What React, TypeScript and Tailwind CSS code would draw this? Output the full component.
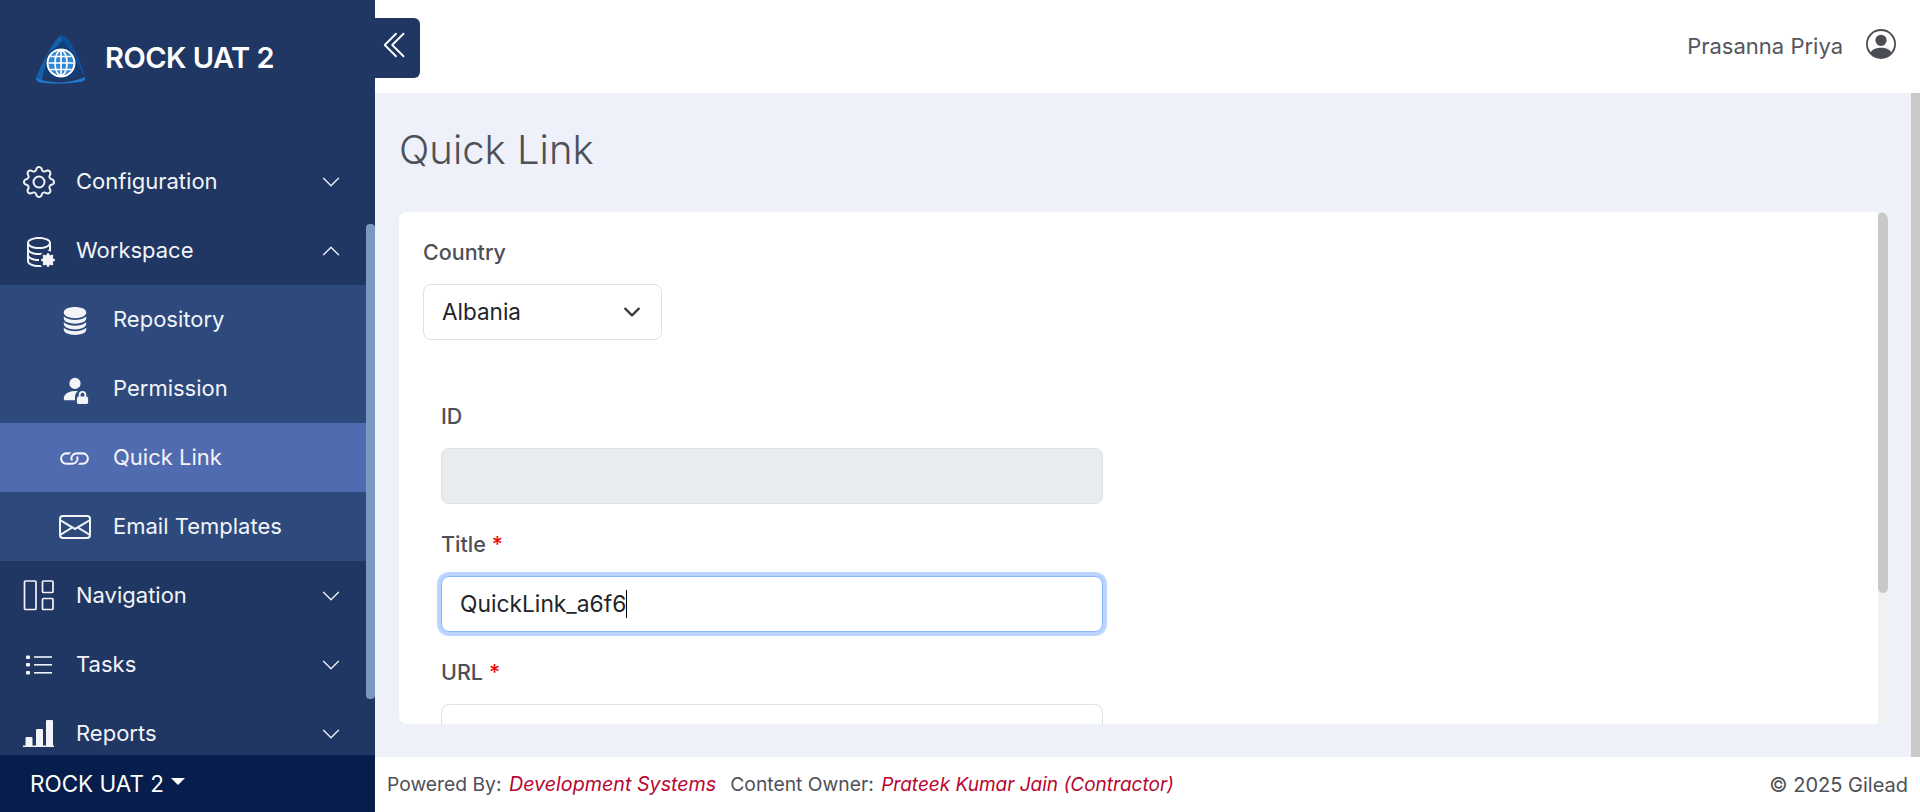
import { ReactNode } from 'react';
import {
  BsGear,
  BsDatabaseGear,
  BsDatabaseFill,
  BsPersonFillLock,
  BsLink,
  BsEnvelope,
  BsChevronDown,
  BsChevronUp,
  BsChevronDoubleLeft,
  BsPersonCircle,
} from 'react-icons/bs';

const Logo = () => (
  <svg width="50" height="50" viewBox="0 0 50 50" className="shrink-0 mt-[4px]">
    <path d="M25 5 C33 8 41 22 43 38 C36 46 14 46 7 38 C9 22 17 8 25 5Z" fill="#123f7c" />
    <path d="M25 0 C16 7 5 30 0 43 C0 46 2 47 6 45 C8 30 17 12 29 4 C28 2 27 0 25 0Z" fill="#1560ab" />
    <path d="M23 1 C28 -1 32 3 35 8 C41 19 47 33 49 43 C43 33 36 14 23 1Z" fill="#0f4f98" />
    <path d="M0 43 C14 49 34 49 49 42 C50 45 47 47 43 47 C30 49 12 49 3 47 C1 46 0 45 0 43Z" fill="#1f7ad4" />
    <circle cx="25" cy="28" r="15.5" fill="#0b2f66" />
    <circle cx="25" cy="28" r="14.5" fill="#ffffff" />
    <circle cx="25" cy="28" r="12.5" fill="#2f86d6" />
    <g fill="none" stroke="#ffffff" strokeWidth="1.7">
      <ellipse cx="25" cy="28" rx="6" ry="12.5" />
      <path d="M25 15.5 V40.5 M12.5 28 H37.5 M14.5 21.5 H35.5 M14.5 34.5 H35.5" />
    </g>
  </svg>
);

const NavigationIcon = () => (
  <svg width="31" height="31" viewBox="0 0 31 31" fill="none" stroke="currentColor" strokeWidth="1.7">
    <rect x="1.5" y="1" width="11.5" height="28.5" rx="1" />
    <rect x="19.5" y="1" width="10.5" height="11.5" rx="1" />
    <rect x="19.5" y="18.5" width="10.5" height="11" rx="1" />
  </svg>
);

const TasksIcon = () => (
  <svg width="27" height="20" viewBox="0 0 27 20" fill="currentColor" className="ml-[3px]">
    <rect x="0" y="0.5" width="4" height="3.5" rx="1" />
    <rect x="0" y="8" width="4" height="3.5" rx="1" />
    <rect x="0" y="16" width="4" height="3.5" rx="1" />
    <rect x="8" y="1.2" width="18" height="1.6" />
    <rect x="8" y="9" width="18" height="1.6" />
    <rect x="8" y="17" width="18" height="1.6" />
  </svg>
);

const ReportsIcon = () => (
  <svg width="31" height="27" viewBox="0 0 31 27" fill="currentColor">
    <rect x="2.5" y="17" width="7" height="9" rx="1" />
    <rect x="13" y="9" width="7" height="17" rx="1" />
    <rect x="23" y="0" width="7" height="26" rx="1" />
    <rect x="0" y="25.5" width="31" height="1.5" />
  </svg>
);

interface MenuRowProps {
  icon: ReactNode;
  label: string;
  open?: boolean;
}

function MenuRow({ icon, label, open }: MenuRowProps) {
  return (
    <div className="h-[69px] flex items-center text-[#f2f4f8]">
      <div className="w-[76px] pl-[23px] shrink-0 flex items-center">{icon}</div>
      <span className="text-[22px] flex-1">{label}</span>
      {open ? (
        <BsChevronUp className="w-[20px] h-[20px] mr-[25px]" />
      ) : (
        <BsChevronDown className="w-[20px] h-[20px] mr-[25px]" />
      )}
    </div>
  );
}

interface SubRowProps {
  icon: ReactNode;
  label: string;
  active?: boolean;
}

function SubRow({ icon, label, active }: SubRowProps) {
  return (
    <div className={`h-[69px] flex items-center text-[#f2f4f8] ${active ? 'bg-[#516bb0]' : ''}`}>
      <div className="w-[113px] pl-[59px] shrink-0 flex items-center">{icon}</div>
      <span className="text-[22px]">{label}</span>
    </div>
  );
}

function Field({ label, required, children }: { label: string; required?: boolean; children: ReactNode }) {
  return (
    <div className="w-[662px] mb-[25px]">
      <div className="h-[31px] mb-[16px] text-[21.5px] font-medium text-[#4e5057] leading-[31px]">
        {label}
        {required && <span className="text-[#ee0000] ml-[6px]">*</span>}
      </div>
      {children}
    </div>
  );
}

export default function App() {
  return (
    <div className="h-screen w-full flex overflow-hidden bg-white font-['Inter','Liberation_Sans',sans-serif]">
      {/* sidebar */}
      <aside className="w-[375px] shrink-0 flex flex-col bg-[#203663]">
        <div className="h-[116px] shrink-0 flex items-center pl-[36px] gap-[19px]">
          <Logo />
          <span className="text-[29px] font-semibold text-white tracking-[-0.5px]">ROCK UAT 2</span>
        </div>
        <div className="flex-1 flex min-h-0 overflow-hidden relative">
          <nav className="flex-1 min-w-0 pt-[31px]">
            <MenuRow icon={<BsGear className="w-[32px] h-[32px]" />} label="Configuration" />
            <MenuRow icon={<BsDatabaseGear className="w-[32px] h-[32px]" />} label="Workspace" open />
            <div className="bg-[#2e4a7d]">
              <SubRow icon={<BsDatabaseFill className="w-[30px] h-[30px] ml-[1px]" />} label="Repository" />
              <SubRow icon={<BsPersonFillLock className="w-[30px] h-[30px] ml-[1px]" />} label="Permission" />
              <SubRow icon={<BsLink className="w-[33px] h-[33px] -ml-[1px]" />} label="Quick Link" active />
              <SubRow icon={<BsEnvelope className="w-[32px] h-[32px]" />} label="Email Templates" />
            </div>
            <MenuRow icon={<NavigationIcon />} label="Navigation" />
            <MenuRow icon={<TasksIcon />} label="Tasks" />
            <MenuRow icon={<ReportsIcon />} label="Reports" />
          </nav>
          <div className="w-[9px] shrink-0 pt-[108px]">
            <div className="h-[475px] rounded-[4px] bg-[#7b98c2]" />
          </div>
        </div>
        <div className="h-[57px] shrink-0 bg-[#071d4b] flex items-center pl-[30px] text-white text-[22.5px]">
          ROCK UAT 2
          <span className="ml-[7px] mb-[4px] w-0 h-0 border-x-[7px] border-x-transparent border-t-[7px] border-t-white" />
        </div>
      </aside>

      {/* main */}
      <div className="flex-1 min-w-0 flex flex-col relative">
        <button className="absolute left-0 top-[18px] w-[45px] h-[60px] bg-[#203663] rounded-r-[6px] flex items-center text-white pl-[6px] pb-[7px]">
          <BsChevronDoubleLeft className="w-[30px] h-[30px]" />
        </button>
        <header className="h-[93px] shrink-0 flex items-start justify-end pt-[32px] pr-[24px] gap-[23px] text-[#54565d]">
          <span className="text-[22px] leading-[29px]">Prasanna Priya</span>
          <BsPersonCircle className="w-[30px] h-[30px] text-[#4b4d55] -mt-[3px]" />
        </header>
        <div className="flex-1 min-h-0 flex bg-[#eef1f9]">
          <div className="flex-1 min-w-0 flex flex-col pl-[24px] pr-[23px]">
            <h1 className="h-[119px] shrink-0 text-[40px] font-light text-[#4f5158] flex items-center pb-[6px]">
              Quick Link
            </h1>
            <div className="h-[512px] shrink-0 flex bg-white rounded-[8px] overflow-hidden">
              <div className="flex-1 min-w-0 overflow-hidden pl-[24px] pt-[25px]">
                <div className="h-[31px] mb-[16px] text-[21.5px] font-medium text-[#4e5057] leading-[31px]">
                  Country
                </div>
                <div className="w-[239px] h-[56px] border border-[#dee2e6] rounded-[8px] flex items-center justify-between pl-[18px] pr-[20px] text-[#212529] text-[22.5px]">
                  Albania
                  <BsChevronDown className="w-[18px] h-[18px] stroke-[1px] text-[#343a40]" />
                </div>
                <div className="pl-[18px] pt-[61px]">
                  <Field label="ID">
                    <div className="h-[56px] bg-[#e9ecef] border border-[#dee2e6] rounded-[8px]" />
                  </Field>
                  <Field label="Title" required>
                    <div className="h-[56px] bg-white border border-[#86b7fe] rounded-[8px] ring-4 ring-[#bbd6fe] flex items-center pl-[18px] text-[#212529] text-[22.8px]">
                      QuickLink_a6f6
                      <span className="w-[1px] h-[28px] bg-black" />
                    </div>
                  </Field>
                  <Field label="URL" required>
                    <div className="h-[56px] bg-white border border-[#dee2e6] rounded-[8px]" />
                  </Field>
                </div>
              </div>
              <div className="w-[10px] shrink-0 bg-[#f1f1f1]">
                <div className="h-[381px] rounded-[5px] bg-[#c8c8c8]" />
              </div>
            </div>
          </div>
          <div className="w-[9px] shrink-0 bg-[#c9c9c9]" />
        </div>
        <footer className="h-[55px] shrink-0 flex items-center justify-between pl-[12px] pr-[12px] text-[19.3px] text-[#4e5057]">
          <div>
            Powered By: <i className="text-[#b8062f] text-[19.7px] ml-[2px]">Development Systems</i>
            <span className="ml-[14px]">Content Owner: </span>
            <i className="text-[#b8062f] text-[19px] ml-[2px]">Prateek Kumar Jain (Contractor)</i>
          </div>
          <div className="text-[20px]">© 2025 Gilead</div>
        </footer>
      </div>
    </div>
  );
}
